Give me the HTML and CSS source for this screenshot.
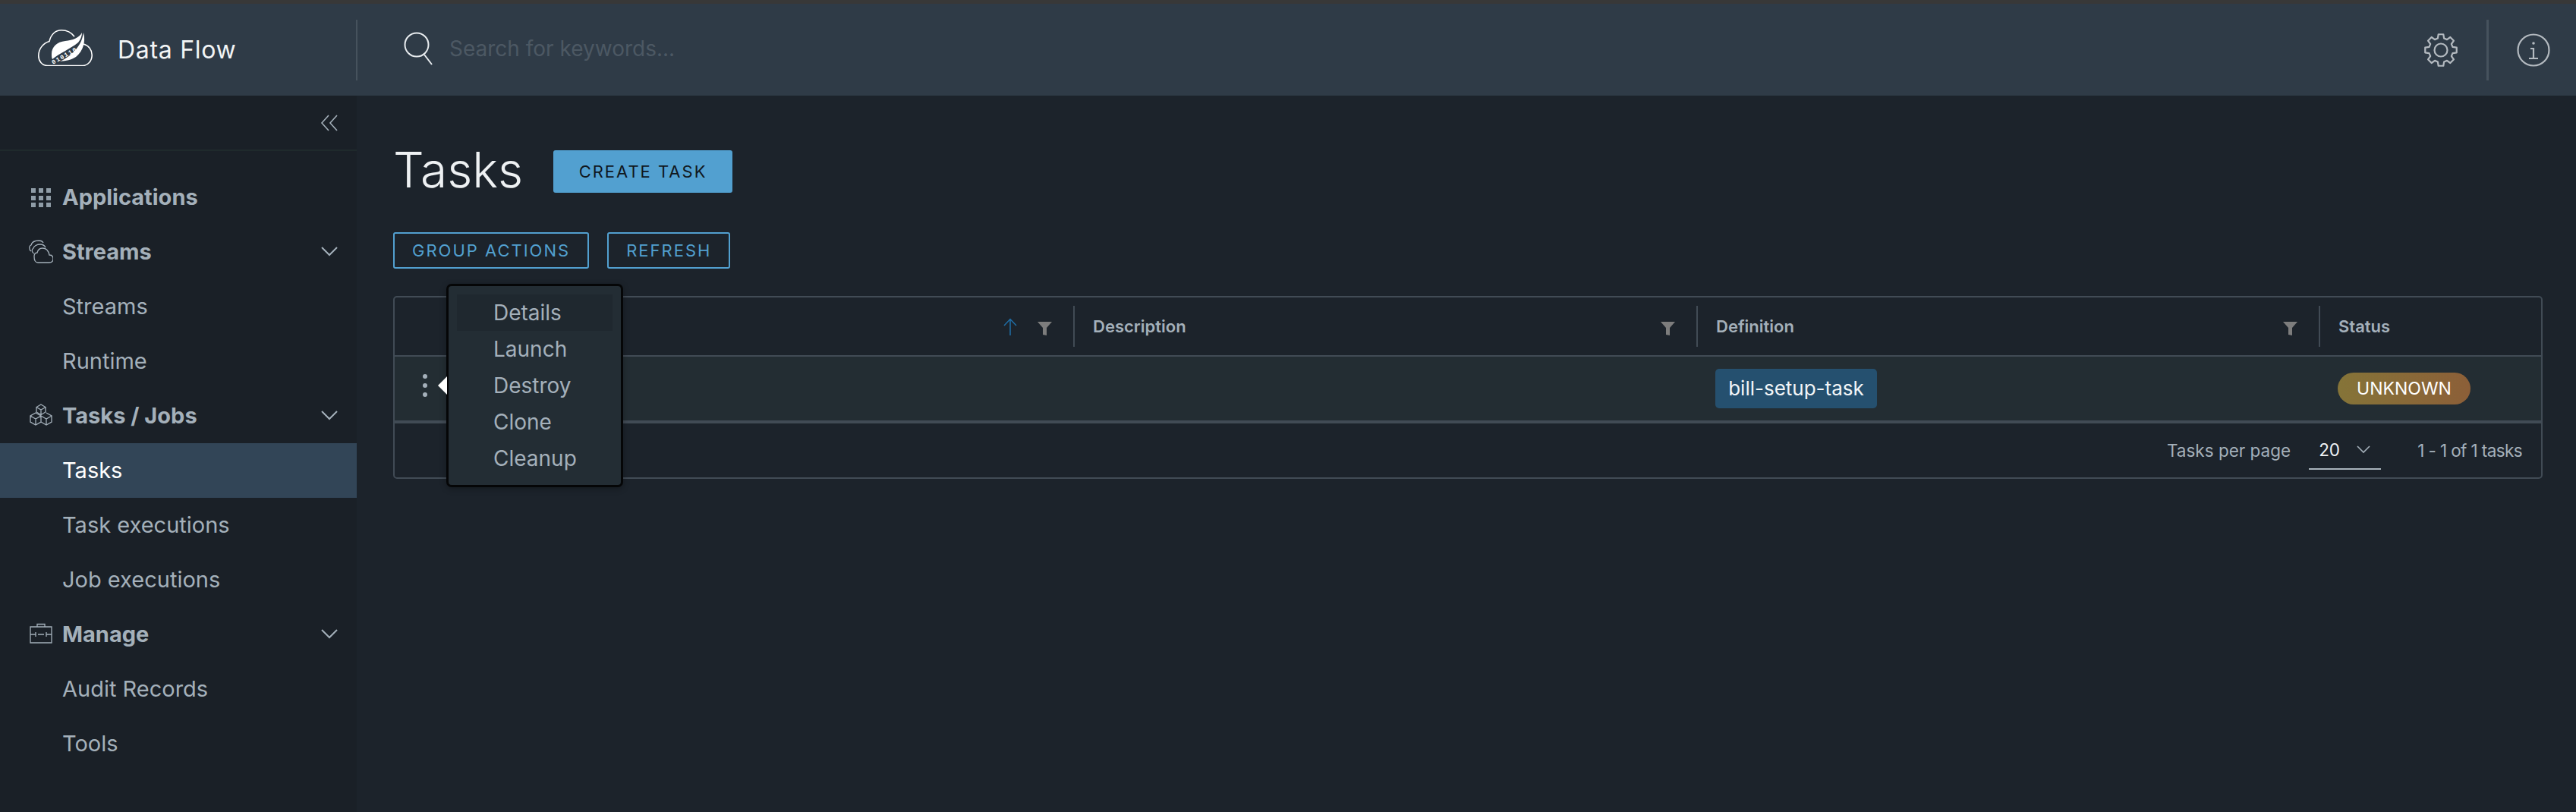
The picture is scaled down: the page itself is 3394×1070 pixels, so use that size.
FILE: index.html
```html
<!DOCTYPE html>
<html lang="en">
<head>
    <meta charset="UTF-8">
    <title>Data Flow - Tasks</title>
    <link rel="stylesheet" href="styles.css">
</head>
<body>
    <div class="top-strip"></div>

    <header class="app-header">
        <div class="brand">
            <svg class="logo" width="72" height="48" viewBox="0 0 72 48">
                <path d="M13 47.5H59C66 47.5 71.2 41 71.2 33.5 71.2 27 67 21 60 19M48 9.3C44 3.8 38 .8 31 .8 23 .8 17 6.5 15 15.5 7 18 .8 25 .8 34.5.8 41 5 47.5 13 47.5" fill="none" stroke="#fff" stroke-width="1.6"/>
                <path d="M58 4C54 11 46 14 36 15 25 16 18 23 18 32 18 35 18 37 19 39 28 31 42 26 53 17 56 13 58 9 58 4Z" fill="#fff"/>
                <path d="M60 4C63 15 60 28 50 36 44 40 37 41 29 42 40 37 50 28 55 19 58 14 59 9 60 4Z" fill="#fff"/>
                <text x="20" y="46" class="logo-bits" transform="rotate(-30 20 46)">010110</text>
            </svg>
            <span class="brand-name">Data Flow</span>
        </div>
        <div class="search">
            <svg width="44" height="44" viewBox="0 0 44 44" fill="none" stroke="#e8ecef" stroke-width="2">
                <circle cx="17" cy="17" r="15.5"/>
                <path d="M27 30l10 13"/>
            </svg>
            <span class="search-hint">Search for keywords...</span>
        </div>
        <div class="header-actions">
            <svg class="gear" width="46" height="46" viewBox="0 0 46 46" fill="none" stroke="#b4bac0" stroke-width="2.2" stroke-linejoin="round">
                <polygon points="18.86,7.55 19.71,2.26 26.29,2.26 27.14,7.55 31,9.14 35.34,6.01 39.99,10.66 36.86,15 38.45,18.86 43.74,19.71 43.74,26.29 38.45,27.14 36.86,31 39.99,35.34 35.34,39.99 31,36.86 27.14,38.45 26.29,43.74 19.71,43.74 18.86,38.45 15,36.86 10.66,39.99 6.01,35.34 9.14,31 7.55,27.14 2.26,26.29 2.26,19.71 7.55,18.86 9.14,15 6.01,10.66 10.66,6.01 15,9.14"/>
                <circle cx="23" cy="23" r="8.5"/>
            </svg>
            <span class="header-sep"></span>
            <svg class="info" width="44" height="44" viewBox="0 0 44 44" fill="none" stroke="#b4bac0" stroke-width="2.2">
                <circle cx="22" cy="22" r="20.5"/>
                <path d="M18 20h4v13M16 33h12"/>
                <circle cx="22" cy="13" r="1.8" fill="#b4bac0" stroke="none"/>
            </svg>
        </div>
    </header>

    <div class="layout">
        <nav class="sidebar">
            <div class="collapse-row">
                <svg width="24" height="22" viewBox="0 0 24 22" fill="none" stroke="#a4b0ba" stroke-width="1.6">
                    <path d="M11 1L2 11l9 10M22 1l-9 10 9 10"/>
                </svg>
            </div>
            <ul class="nav-list">
                <li class="nav-item nav-group">
                    <svg class="nav-icon" width="32" height="30" viewBox="0 0 32 30" fill="#8f9ca7">
                        <rect x="3" y="4" width="6" height="6"/><rect x="13" y="4" width="6" height="6"/><rect x="23" y="4" width="6" height="6"/>
                        <rect x="3" y="14" width="6" height="6"/><rect x="13" y="14" width="6" height="6"/><rect x="23" y="14" width="6" height="6"/>
                        <rect x="3" y="23" width="6" height="6"/><rect x="13" y="23" width="6" height="6"/><rect x="23" y="23" width="6" height="6"/>
                    </svg>
                    Applications
                </li>
                <li class="nav-item nav-group">
                    <svg class="nav-icon" width="32" height="32" viewBox="0 0 32 32" fill="none" stroke="#a4b0ba" stroke-width="1.3">
                        <path d="M12 31H27C30 31 32 29 32 26 32 23 30 21 27 21 26 16 23 12 18 12 14 12 12 14 11 18 8 18 7 20 7 23 7 28 9 31 12 31Z"/>
                        <path d="M3 16C0 14 0 9 3 8 4 4 8 2 13 2 16 2 18 3 19 5"/>
                        <path d="M7 19C4 18 3 14 6 12 7 9 11 7 15 7 19 7 21 9 22 11"/>
                    </svg>
                    Streams
                    <svg class="nav-chevron" width="24" height="14" viewBox="0 0 24 14" fill="none" stroke="#a4b0ba" stroke-width="2"><path d="M2 2l10 10L22 2"/></svg>
                </li>
                <li class="nav-item">Streams</li>
                <li class="nav-item">Runtime</li>
                <li class="nav-item nav-group">
                    <svg class="nav-icon" width="32" height="32" viewBox="0 0 32 32" fill="none" stroke="#a4b0ba" stroke-width="1.3">
                        <path d="M16 2l6 3.5V12l-6 3.5L10 12V5.5zM10 5.5L16 9l6-3.500M16 9v6"/>
                        <path d="M9 13l7 4v8l-7 4-7-4v-8zM2 17l7 4 7-4M9 21v8"/>
                        <path d="M23 13l7 4v8l-7 4-7-4M16 17l7 4 7-4M23 21v8"/>
                    </svg>
                    Tasks / Jobs
                    <svg class="nav-chevron" width="24" height="14" viewBox="0 0 24 14" fill="none" stroke="#a4b0ba" stroke-width="2"><path d="M2 2l10 10L22 2"/></svg>
                </li>
                <li class="nav-item nav-active">Tasks</li>
                <li class="nav-item">Task executions</li>
                <li class="nav-item">Job executions</li>
                <li class="nav-item nav-group">
                    <svg class="nav-icon" width="32" height="30" viewBox="0 0 32 30" fill="none" stroke="#a4b0ba" stroke-width="1.3">
                        <path d="M9 16H2V6H30V16H23M2 16V27H30V16M11 6V2.500H21V6M12 16H20M9 13V19M23 13V19"/>
                    </svg>
                    Manage
                    <svg class="nav-chevron" width="24" height="14" viewBox="0 0 24 14" fill="none" stroke="#a4b0ba" stroke-width="2"><path d="M2 2l10 10L22 2"/></svg>
                </li>
                <li class="nav-item">Audit Records</li>
                <li class="nav-item">Tools</li>
            </ul>
        </nav>

        <main class="content">
            <div class="title-row">
                <h1>Tasks</h1>
                <button class="btn btn-primary">Create task</button>
            </div>
            <div class="action-row">
                <button class="btn btn-outline">Group actions</button>
                <button class="btn btn-outline">Refresh</button>
            </div>

            <div class="datagrid">
                <div class="grid-row grid-head">
                    <div class="cell cell-actions"></div>
                    <div class="cell cell-name">
                        <svg class="sort-arrow" width="18" height="23" viewBox="0 0 18 23" fill="none" stroke="#1f6fa8" stroke-width="1.500"><path d="M9 23V1.500M1 10l8-8.500 8 8.500"/></svg>
                        <svg class="filter" width="19" height="18" viewBox="0 0 19 18" fill="#7d7d7d"><path d="M0 0h19l-7 8v10l-5-1V8z"/></svg>
                    </div>
                    <div class="cell cell-desc">
                        <span class="head-label">Description</span>
                        <svg class="filter" width="19" height="18" viewBox="0 0 19 18" fill="#7d7d7d"><path d="M0 0h19l-7 8v10l-5-1V8z"/></svg>
                    </div>
                    <div class="cell cell-def">
                        <span class="head-label">Definition</span>
                        <svg class="filter" width="19" height="18" viewBox="0 0 19 18" fill="#7d7d7d"><path d="M0 0h19l-7 8v10l-5-1V8z"/></svg>
                    </div>
                    <div class="cell cell-status"><span class="head-label">Status</span></div>
                </div>
                <div class="grid-row grid-body">
                    <div class="cell cell-actions">
                        <span class="kebab"><i></i><i></i><i></i></span>
                        <span class="pop-arrow"></span>
                    </div>
                    <div class="cell cell-name"></div>
                    <div class="cell cell-desc"></div>
                    <div class="cell cell-def"><span class="chip">bill-setup-task</span></div>
                    <div class="cell cell-status"><span class="badge">UNKNOWN</span></div>
                </div>
                <div class="grid-foot">
                    <span>Tasks per page</span>
                    <span class="page-size">20
                        <svg width="18" height="11" viewBox="0 0 18 11" fill="none" stroke="#a4b0ba" stroke-width="1.600"><path d="M1 1l8 8 8-8"/></svg>
                    </span>
                    <span class="page-count">1 - 1 of 1 tasks</span>
                </div>

                <ul class="row-menu">
                    <li class="menu-hover">Details</li>
                    <li>Launch</li>
                    <li>Destroy</li>
                    <li>Clone</li>
                    <li>Cleanup</li>
                </ul>
            </div>
        </main>
    </div>
</body>
</html>
```

FILE: styles.css
```css
* {
    box-sizing: border-box;
}
html, body {
    height: 100%;
}
body {
    margin: 0;
    display: flex;
    flex-direction: column;
    background: #1c232b;
    color: #a4b0ba;
    font-family: Inter, "Noto Sans", sans-serif;
    overflow: hidden;
}
.top-strip {
    height: 5px;
    background: #383838;
}

/* header */
.app-header {
    height: 121px;
    display: flex;
    align-items: center;
    background: #2f3b47;
}
.brand {
    width: 471px;
    height: 80px;
    display: flex;
    align-items: center;
    padding-left: 50px;
    border-right: 2px solid #46525d;
}
.logo {
    margin-right: 33px;
    margin-bottom: 5px;
}
.logo-bits {
    font-family: "Liberation Mono", monospace;
    font-size: 8px;
    font-weight: bold;
    letter-spacing: 1.5px;
    fill: #fff;
}
.brand-name {
    font-size: 32px;
    letter-spacing: 0.7px;
    color: #f2f4f5;
}
.search {
    display: flex;
    align-items: center;
    gap: 16px;
    padding: 0 0 4px 61px;
    flex: 1;
}
.search-hint {
    font-size: 28px;
    color: #4c5863;
}
.header-actions {
    display: flex;
    align-items: center;
    padding-right: 34px;
}
.header-sep {
    width: 3px;
    height: 80px;
    background: #46525d;
    margin: 0 37px;
}

/* sidebar */
.layout {
    flex: 1;
    display: flex;
}
.sidebar {
    width: 470px;
    background: #1a2027;
}
.collapse-row {
    height: 73px;
    display: flex;
    align-items: center;
    justify-content: flex-end;
    padding-right: 24px;
    border-bottom: 2px solid #1f2a2c;
}
.nav-list {
    list-style: none;
    margin: 25px 0 0;
    padding: 0;
}
.nav-item {
    height: 72px;
    display: flex;
    align-items: center;
    padding: 0 0 2px 82px;
    font-size: 29px;
}
.nav-group {
    font-weight: 700;
}
.nav-icon {
    margin-left: -44px;
    margin-right: 12px;
}
.nav-chevron {
    margin-left: auto;
    margin-right: 24px;
}
.nav-active {
    background: #324557;
    color: #fff;
}

/* content */
.content {
    flex: 1;
    padding: 0 44px 0 48px;
}
.title-row {
    display: flex;
    align-items: center;
    gap: 40px;
    height: 72px;
    margin-top: 64px;
}
h1 {
    margin: 0 0 6px;
    font-size: 64px;
    font-weight: 300;
    color: #eef1f3;
}
.btn {
    font-family: inherit;
    text-transform: uppercase;
    letter-spacing: 2px;
    border-radius: 3px;
}
.btn-primary {
    width: 236px;
    height: 56px;
    font-size: 22px;
    background: #52a0d0;
    color: #10171d;
    border: 0;
}
.btn-outline {
    height: 48px;
    font-size: 22px;
    padding: 0 23px;
    background: transparent;
    color: #52a0d0;
    border: 2px solid #52a0d0;
}
.action-row {
    display: flex;
    gap: 24px;
    margin-top: 44px;
}

/* datagrid */
.datagrid {
    position: relative;
    width: 2832px;
    height: 241px;
    margin-top: 36px;
    border: 2px solid #414b55;
    border-radius: 5px;
}
.grid-row {
    display: grid;
    grid-template-columns: 70px 824px 821px 820px 1fr;
}
.grid-head {
    height: 78px;
    border-bottom: 2px solid #414b55;
    align-items: center;
}
.grid-body {
    height: 88px;
    background: #232d33;
    border-bottom: 4px solid #414b55;
    align-items: center;
}
.cell {
    display: flex;
    align-items: center;
    padding-left: 25px;
    height: 54px;
}
.grid-head .cell {
    border-left: 2px solid #414b55;
    padding-left: 24px;
}
.grid-head .cell-actions {
    border-left: 0;
}
.grid-body .cell-actions {
    padding-bottom: 8px;
}
.head-label {
    font-size: 22px;
    font-weight: 600;
}
.filter {
    margin: 6px 28px 0 auto;
}
.sort-arrow {
    margin-left: auto;
    margin-right: 27px;
}
.sort-arrow + .filter {
    margin-left: 0;
}
.kebab {
    display: flex;
    flex-direction: column;
    gap: 6px;
    margin-left: 12px;
}
.kebab i {
    width: 6px;
    height: 6px;
    border-radius: 50%;
    background: #a4b0ba;
}
.pop-arrow {
    position: relative;
    z-index: 2;
    width: 0;
    height: 0;
    margin-left: 14px;
    border-top: 12px solid transparent;
    border-bottom: 12px solid transparent;
    border-right: 12px solid #fff;
}
.chip {
    width: 213px;
    height: 52px;
    line-height: 52px;
    text-align: center;
    border-radius: 5px;
    font-size: 26px;
    color: #f2f5f7;
    background: #25506f;
}
.badge {
    width: 175px;
    height: 42px;
    line-height: 42px;
    text-align: center;
    border-radius: 21px;
    font-size: 23px;
    color: #fff;
    background: linear-gradient(90deg, #857438, #8c5f38);
}
.grid-foot {
    display: flex;
    align-items: center;
    justify-content: flex-end;
    height: 71px;
    padding-right: 25px;
    font-size: 22.5px;
}
.page-size {
    width: 95px;
    height: 50px;
    display: flex;
    align-items: center;
    justify-content: space-between;
    margin: 0 48px 0 24px;
    padding: 0 14px 0 13px;
    color: #eef1f3;
    border-bottom: 2px solid #a9b3bb;
}
.page-count {
    letter-spacing: -0.6px;
}
.row-menu {
    position: absolute;
    left: 68px;
    top: -18px;
    width: 233px;
    height: 268px;
    margin: 0;
    padding: 11px;
    list-style: none;
    background: #232d34;
    border: 3px solid #050607;
    border-radius: 7px;
    box-shadow: 0 2px 8px rgba(0, 0, 0, 0.3);
    font-size: 28px;
}
.row-menu li {
    height: 48px;
    line-height: 48px;
    padding-left: 48px;
}
.menu-hover {
    background: #1f282f;
}
```
